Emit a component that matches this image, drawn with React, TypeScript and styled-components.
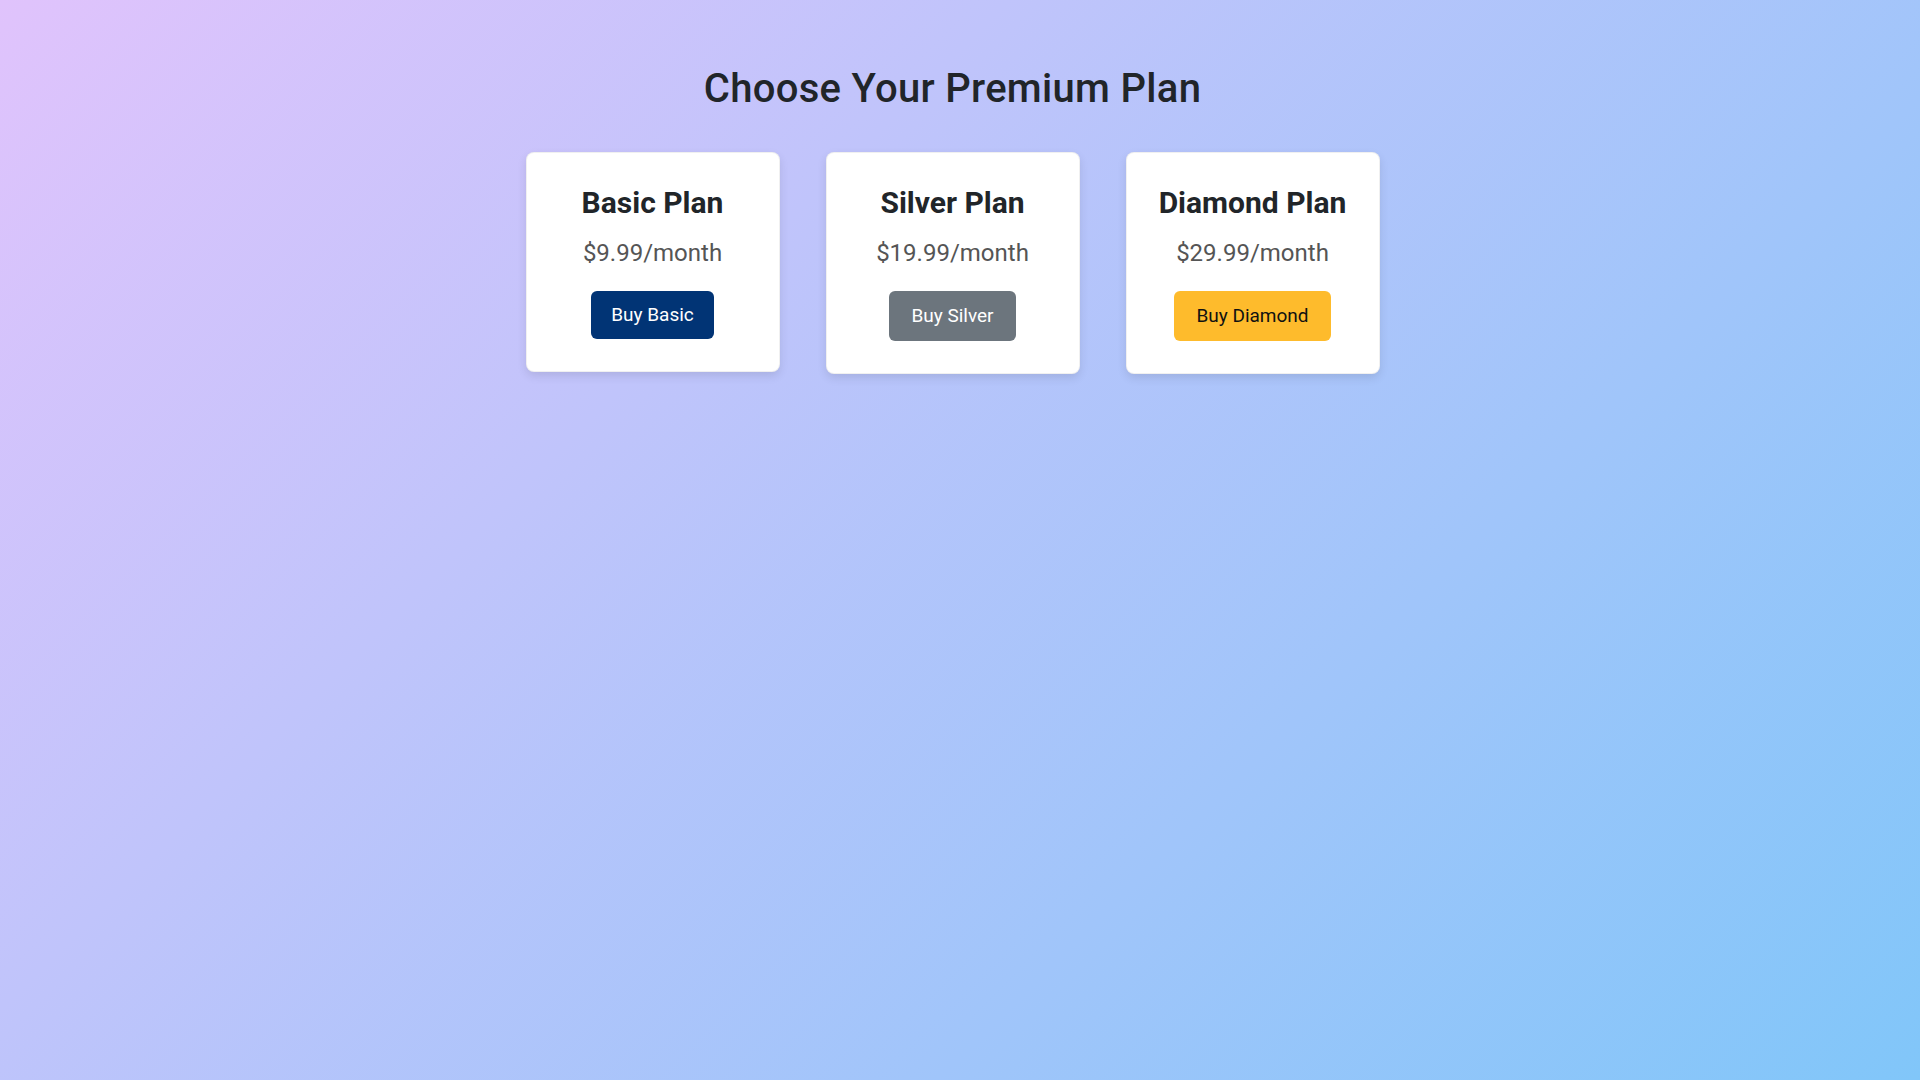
import styled, { createGlobalStyle } from 'styled-components';

const GlobalStyle = createGlobalStyle`
  html {
    overflow-y: scroll;
  }
  html, body {
    margin: 0;
    padding: 0;
  }
  body {
    font-family: Roboto, 'Noto Sans', sans-serif;
    color: #212529;
    background: linear-gradient(135deg, #e0c3fc 0%, #80c6f9 100%);
  }
  * {
    box-sizing: border-box;
  }
`;

const Page = styled.main`
  min-height: calc(100vh + 25px);
  display: flex;
  flex-direction: column;
  align-items: center;
  padding: 65px 15px 0 0;
`;

const Title = styled.h1`
  margin: 0 0 39px;
  font-size: 40px;
  font-weight: 500;
  letter-spacing: 0.3px;
  line-height: 48px;
  color: #212529;
`;

const Plans = styled.section`
  display: flex;
  gap: 46px;
  align-items: flex-start;
`;

const Card = styled.article`
  width: 254px;
  padding: 32px 16px;
  background: #fff;
  border: 1px solid rgba(0, 0, 0, 0.06);
  border-radius: 8px;
  box-shadow: 0 4px 10px rgba(0, 0, 0, 0.1);
  display: flex;
  flex-direction: column;
  align-items: center;
  text-align: center;
`;

const PlanName = styled.h2`
  margin: 0 0 14px;
  font-size: 30px;
  font-weight: 700;
  line-height: 36px;
  color: #212529;
`;

const Price = styled.p`
  margin: 0 0 20px;
  font-size: 24px;
  line-height: 36px;
  color: #555;
`;

const BuyButton = styled.button<{ $bg: string; $fg: string; $tall?: boolean }>`
  font-family: inherit;
  font-size: 19px;
  line-height: ${({ $tall }) => ($tall ? '32px' : '30px')};
  padding: 9px ${({ $tall }) => ($tall ? '22px' : '20px')};
  border: 0;
  border-radius: 6px;
  background: ${({ $bg }) => $bg};
  color: ${({ $fg }) => $fg};
  cursor: pointer;
`;

const plans = [
  { name: 'Basic Plan', price: '$9.99/month', cta: 'Buy Basic', bg: '#013475', fg: '#fff', tall: false },
  { name: 'Silver Plan', price: '$19.99/month', cta: 'Buy Silver', bg: '#6c757d', fg: '#fff', tall: true },
  { name: 'Diamond Plan', price: '$29.99/month', cta: 'Buy Diamond', bg: '#febb2c', fg: '#111', tall: true },
];

export default function App() {
  return (
    <>
      <GlobalStyle />
      <Page>
        <Title>Choose Your Premium Plan</Title>
        <Plans>
          {plans.map(p => (
            <Card key={p.name}>
              <PlanName>{p.name}</PlanName>
              <Price>{p.price}</Price>
              <BuyButton $bg={p.bg} $fg={p.fg} $tall={p.tall}>
                {p.cta}
              </BuyButton>
            </Card>
          ))}
        </Plans>
      </Page>
    </>
  );
}
